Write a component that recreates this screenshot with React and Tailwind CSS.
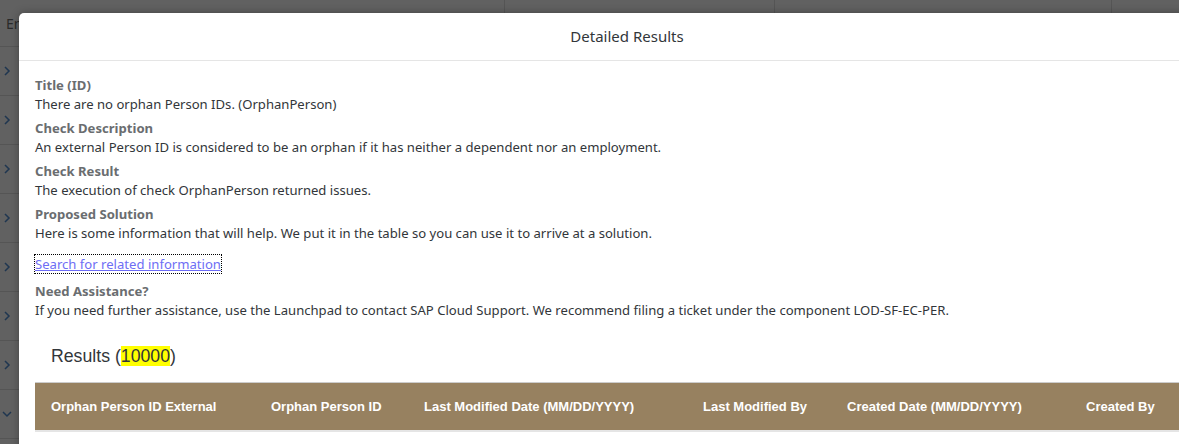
import React from 'react';

const rows = [0, 1, 2, 3, 4, 5, 6, 7];

const Chevron = ({ down }) => (
  <svg width="12" height="12" viewBox="0 0 12 12" className="text-[#1f3650]">
    {down ? (
      <path d="M2 4l4 4 4-4" fill="none" stroke="currentColor" strokeWidth="1.5" />
    ) : (
      <path d="M4 2l4 4-4 4" fill="none" stroke="currentColor" strokeWidth="1.5" />
    )}
  </svg>
);

const Section = ({ label, children }) => (
  <div className="mb-[5px]">
    <p className="font-bold text-[#6a6d70] leading-[19px]">{label}</p>
    <p className="text-[#32363a] leading-[19px]">{children}</p>
  </div>
);

const columns = [
  { name: 'Orphan Person ID External', w: 'w-[220px]' },
  { name: 'Orphan Person ID', w: 'w-[153px]' },
  { name: 'Last Modified Date (MM/DD/YYYY)', w: 'w-[279px]' },
  { name: 'Last Modified By', w: 'w-[144px]' },
  { name: 'Created Date (MM/DD/YYYY)', w: 'w-[239px]' },
  { name: 'Created By', w: 'w-[120px]' },
];

export default function App() {
  return (
    <div className="relative w-[1179px] h-[444px] overflow-hidden bg-[#616161]">
      {/* table behind the overlay */}
      <div className="flex flex-col">
        <div className="h-[47px] flex border-b border-[#555]">
          <div className="w-[505px] border-r border-[#555] pl-[6px] pt-[13px] text-[#2a2a2a] text-[14px] font-['Noto_Sans',sans-serif]">
            En
          </div>
          <div className="w-[270px] border-r border-[#555]" />
          <div className="w-[337px] border-r border-[#555]" />
          <div className="flex-1" />
        </div>
        {rows.map((r) => (
          <div key={r} className="h-[49px] flex items-center pl-[1px] border-b border-[#555]">
            <Chevron down={r === 7} />
          </div>
        ))}
      </div>

      {/* dialog */}
      <div className="absolute left-[19px] top-[13px] w-[1216px] h-[460px] bg-white rounded-tl-[5px] shadow-[0_0_8px_rgba(0,0,0,0.3)] font-['Noto_Sans',sans-serif] text-[13.1px]">
        <div className="h-[48px] flex items-center justify-center border-b border-[#e5e5e5]">
          <h1 className="text-[15px] text-[#32363a]">Detailed Results</h1>
        </div>
        <div className="px-[16px] pt-[15px]">
          <Section label="Title (ID)">There are no orphan Person IDs. (OrphanPerson)</Section>
          <Section label="Check Description">
            An external Person ID is considered to be an orphan if it has neither a dependent nor an employment.
          </Section>
          <Section label="Check Result">The execution of check OrphanPerson returned issues.</Section>
          <Section label="Proposed Solution">
            Here is some information that will help. We put it in the table so you can use it to arrive at a solution.
          </Section>
          <div className="mt-[12px] mb-[8px] leading-[19px]">
            <a href="#" className="text-[#6e6ef5] underline outline-1 outline-dotted outline-black">
              Search for related information
            </a>
          </div>
          <Section label="Need Assistance?">
            If you need further assistance, use the Launchpad to contact SAP Cloud Support. We recommend filing a ticket under the component LOD-SF-EC-PER.
          </Section>

          <h2 className="mt-[24px] pl-[16px] text-[17.7px] leading-[24px] text-[#32363a] font-['Liberation_Sans',Arial,sans-serif]">
            Results (<span className="bg-[#ffff00]">10000</span>)
          </h2>

          <div className="mt-[14px] border-t border-[#cccccc] border-b-2 border-b-[#e5e5e5]">
            <div className="h-[47px] bg-[#978160] flex items-center pl-[16px] font-['Liberation_Sans',Arial,sans-serif] text-[13px] font-bold text-white">
              {columns.map((c) => (
                <div key={c.name} className={`${c.w} shrink-0`}>
                  {c.name}
                </div>
              ))}
            </div>
          </div>
        </div>
      </div>
    </div>
  );
}
